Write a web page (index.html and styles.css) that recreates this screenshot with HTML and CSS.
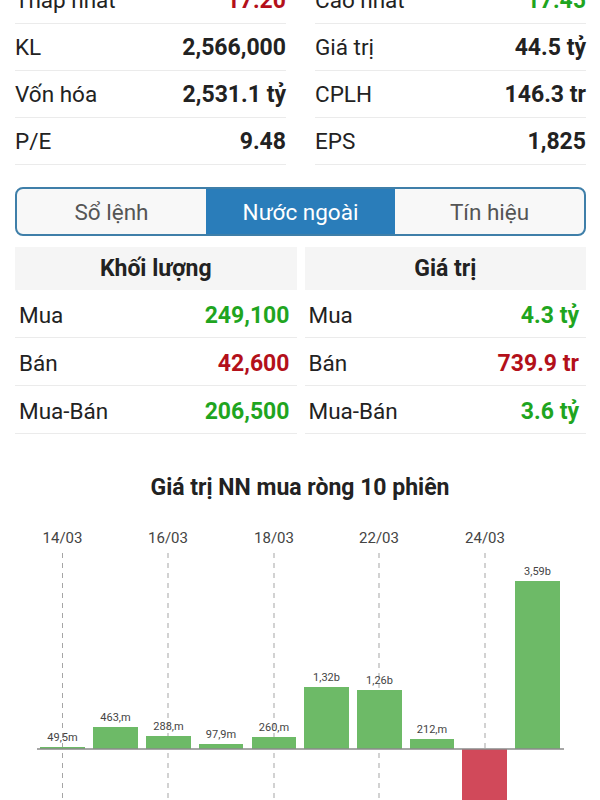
FILE: index.html
```html
<!DOCTYPE HTML>
<html>
<head>
    <title>Nước ngoài</title>
    <meta name="viewport" content="width=device-width, initial-scale=1">
    <link rel="stylesheet" href="styles.css">
</head>
<body>
    <!-- stock summary -->
    <div class="summary">
        <div class="col">
            <div class="row"><span>Thấp nhất</span><b class="down">17.20</b></div>
            <div class="row"><span>KL</span><b>2,566,000</b></div>
            <div class="row"><span>Vốn hóa</span><b>2,531.1 tỷ</b></div>
            <div class="row"><span>P/E</span><b>9.48</b></div>
        </div>
        <div class="col">
            <div class="row"><span>Cao nhất</span><b class="up">17.45</b></div>
            <div class="row"><span>Giá trị</span><b>44.5 tỷ</b></div>
            <div class="row"><span>CPLH</span><b>146.3 tr</b></div>
            <div class="row"><span>EPS</span><b>1,825</b></div>
        </div>
    </div>

    <!-- tabs -->
    <div class="tabs">
        <div class="tab">Sổ lệnh</div>
        <div class="tab active">Nước ngoài</div>
        <div class="tab">Tín hiệu</div>
    </div>

    <!-- foreign trading -->
    <div class="foreign">
        <div class="col">
            <div class="head">Khối lượng</div>
            <div class="row"><span>Mua</span><b class="up">249,100</b></div>
            <div class="row"><span>Bán</span><b class="down">42,600</b></div>
            <div class="row"><span>Mua-Bán</span><b class="up">206,500</b></div>
        </div>
        <div class="col">
            <div class="head">Giá trị</div>
            <div class="row"><span>Mua</span><b class="up">4.3 tỷ</b></div>
            <div class="row"><span>Bán</span><b class="down">739.9 tr</b></div>
            <div class="row"><span>Mua-Bán</span><b class="up">3.6 tỷ</b></div>
        </div>
    </div>

    <h3 class="title">Giá trị NN mua ròng 10 phiên</h3>

    <svg class="chart" width="600" height="290" viewBox="0 510 600 290">
        <!-- grid -->
        <g class="grid">
            <line x1="62.5" y1="552" x2="62.5" y2="810" />
            <line x1="168" y1="552" x2="168" y2="810" />
            <line x1="274" y1="552" x2="274" y2="810" />
            <line x1="379" y1="552" x2="379" y2="810" />
            <line x1="485" y1="552" x2="485" y2="810" />
        </g>
        <g class="dates">
            <text x="62.5" y="542">14/03</text>
            <text x="168" y="542">16/03</text>
            <text x="274" y="542">18/03</text>
            <text x="379" y="542">22/03</text>
            <text x="485" y="542">24/03</text>
        </g>
        <!-- bars -->
        <g class="bars">
            <rect x="40" y="746" width="45" height="2" />
            <rect x="93" y="726" width="45" height="22" />
            <rect x="146" y="735" width="45" height="13" />
            <rect x="199" y="743" width="44" height="5" />
            <rect x="252" y="736" width="44" height="12" />
            <rect x="304" y="686" width="45" height="62" />
            <rect x="357" y="689" width="45" height="59" />
            <rect x="410" y="738" width="44" height="10" />
            <rect class="neg" x="462" y="748" width="45" height="80" />
            <rect x="515" y="580" width="45" height="168" />
        </g>
        <g class="labels">
            <text x="62.5" y="740">49,5m</text>
            <text x="115.5" y="720">463,m</text>
            <text x="168.5" y="729">288,m</text>
            <text x="221" y="737">97,9m</text>
            <text x="274" y="730">260,m</text>
            <text x="326.5" y="680">1,32b</text>
            <text x="379.5" y="683">1,26b</text>
            <text x="432" y="732">212,m</text>
            <text x="537.5" y="574">3,59b</text>
        </g>
        <line class="axis" x1="37" y1="748" x2="564" y2="748" />
    </svg>
</body>
</html>
```
FILE: styles.css
```css
html {font-family: Roboto, "Noto Sans", sans-serif; color: #222;}
body {margin: 0; overflow: hidden;}
.summary {display: grid; grid-template-columns: 1fr 1fr; column-gap: 29px; margin: -23px 14px 0 15px;}
.row {display: flex; justify-content: space-between; align-items: center; height: 46px; border-bottom: 1px solid #ebebeb; font-size: 23px;}
.row span {font-size: 22.5px;}
.row b {font-weight: 700;}
.up {color: #1fa51f;}
.down {color: #b3101a;}
.tabs {display: flex; margin: 22px 14px 0 15px; height: 45px; border: 2px solid #3f7fa9; border-radius: 8px; overflow: hidden; background: #f8f8f8;}
.tab {flex: 1; display: flex; align-items: center; justify-content: center; font-size: 22.5px; color: #555;}
.tab.active {background: #2a7dba; color: #fff;}
.foreign {display: grid; grid-template-columns: 1fr 1fr; column-gap: 8px; margin: 11px 14px 0 15px;}
.foreign .row {height: 44px; padding: 3px 7px 0 4px;}
.head {height: 43px; background: #f5f5f5; display: flex; align-items: center; justify-content: center; font-size: 23px; font-weight: 700;}
.title {margin: 41px 0 0; text-align: center; font-size: 23px; line-height: 26px; font-weight: 700;}
.chart {display: block; margin-top: 10px;}
.grid line {stroke: #a5a5a5; stroke-width: 1; stroke-dasharray: 5 5;}
.dates text {font-size: 15px; fill: #444; text-anchor: middle;}
.bars rect {fill: #6dba67;}
.bars rect.neg {fill: #d1495a;}
.labels text {font-size: 11px; fill: #444; text-anchor: middle;}
.axis {stroke: #8a8a8a; stroke-width: 1.5;}
```
